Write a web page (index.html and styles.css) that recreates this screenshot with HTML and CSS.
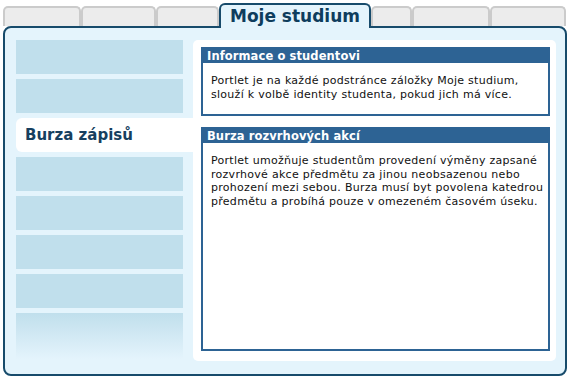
FILE: index.html
```html
<!DOCTYPE html>
<html lang="cs">
<head>
<meta charset="utf-8">
<title>Moje studium</title>
<link rel="stylesheet" href="styles.css">
</head>
<body>
<div class="page">
  <div class="tabs">
    <div class="tab t1"></div>
    <div class="tab t2"></div>
    <div class="tab t3"></div>
    <div class="tab active">Moje studium</div>
    <div class="tab t5"></div>
    <div class="tab t6"></div>
    <div class="tab t7"></div>
  </div>
  <div class="panel">
    <div class="sidebar">
      <div class="item"></div>
      <div class="item"></div>
      <div class="item current">Burza zápisů</div>
      <div class="item"></div>
      <div class="item"></div>
      <div class="item"></div>
      <div class="item"></div>
      <div class="item last"></div>
    </div>
    <div class="content">
      <div class="portlet">
        <div class="portlet-head">Informace o studentovi</div>
        <div class="portlet-body">Portlet je na každé podstránce záložky Moje studium,<br>slouží k volbě identity studenta, pokud jich má více.</div>
      </div>
      <div class="portlet grow">
        <div class="portlet-head">Burza rozvrhových akcí</div>
        <div class="portlet-body">Portlet umožňuje studentům provedení výměny zapsané<br>rozvrhové akce předmětu za jinou neobsazenou nebo<br>prohození mezi sebou. Burza musí byt povolena katedrou<br>předmětu a probíhá pouze v omezeném časovém úseku.</div>
      </div>
    </div>
  </div>
</div>
</body>
</html>
```

FILE: styles.css
```css
html, body {
  margin: 0;
  padding: 0;
  background: #ffffff;
}

body {
  font-family: "DejaVu Sans", Verdana, sans-serif;
  font-size: 11px;
  color: #111111;
}

.page {
  width: 571px;
  height: 380px;
  padding-left: 3px;
  box-sizing: border-box;
}

.tabs {
  display: flex;
  align-items: flex-end;
  height: 26px;
}

.tab {
  box-sizing: border-box;
  flex-shrink: 0;
  height: 20px;
  background: #ececec;
  border: 2px solid #cbcbcb;
  border-bottom: 0;
  border-radius: 5px 5px 0 0;
}

.t1 { width: 78px; }
.t2 { width: 75px; }
.t3 { width: 63px; }
.t5 { width: 41px; }
.t6 { width: 78px; }
.t7 { width: 76px; }

.tab.active {
  position: relative;
  z-index: 2;
  width: 152px;
  height: 25px;
  margin-bottom: -2px;
  background: #e4f4fc;
  border-color: #174b6b;
  border-radius: 6px 6px 0 0;
  color: #0e3d5d;
  font-size: 17px;
  font-weight: bold;
  line-height: 20px;
  text-align: center;
  padding-top: 1px;
}

.panel {
  box-sizing: border-box;
  width: 564px;
  height: 350px;
  border: 2px solid #174b6b;
  border-radius: 8px;
  background: #e4f4fc;
  display: flex;
  gap: 10px;
  padding: 12px 9px 13px 11px;
}

.sidebar {
  width: 167px;
  flex-shrink: 0;
  display: flex;
  flex-direction: column;
  gap: 5px;
}

.item {
  height: 34px;
  background: #c0dfec;
}

.item.current {
  background: #ffffff;
  margin-right: -10px;
  border-radius: 6px 0 0 6px;
  color: #173f5f;
  font-size: 15px;
  font-weight: bold;
  display: flex;
  align-items: center;
  padding-left: 9px;
}

.item.last {
  height: 46px;
  background: linear-gradient(to bottom, #c0dfec 0%, #d2e9f4 50%, #e4f4fc 100%);
}

.content {
  flex: 1;
  min-width: 0;
  background: #ffffff;
  border-radius: 5px;
  padding: 7px 6px 10px 8px;
  display: flex;
  flex-direction: column;
  gap: 11px;
}

.portlet {
  border: 2px solid #2d6394;
  background: #ffffff;
  overflow: hidden;
}

.portlet.grow {
  flex: 1;
}

.portlet-head {
  background: #2d6394;
  color: #ffffff;
  font-weight: bold;
  font-size: 11.5px;
  height: 14px;
  line-height: 14px;
  padding-left: 4px;
  margin-top: -2px;
  padding-top: 2px;
  letter-spacing: 0.1px;
}

.portlet-body {
  padding: 11px 8px 13px 8px;
  line-height: 13.5px;
  letter-spacing: 0.28px;
  white-space: nowrap;
}
```
